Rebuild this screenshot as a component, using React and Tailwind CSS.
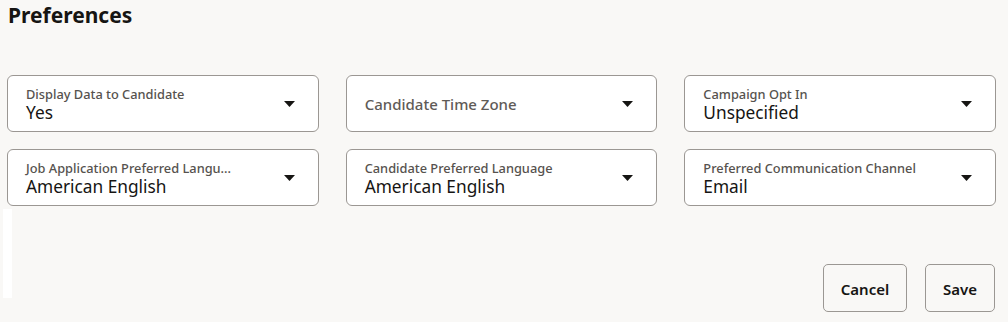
import React from "react";

const font = { fontFamily: '"Noto Sans", "Open Sans", sans-serif' };

function Caret() {
  return (
    <svg width="11" height="6" viewBox="0 0 11 6" className="shrink-0">
      <path d="M0 0 L11 0 L5.5 6 Z" fill="#161513" />
    </svg>
  );
}

function Field({ label, value, placeholder }) {
  return (
    <div className="h-[57px] rounded-[6px] border border-[#9b9793] bg-white flex items-center pl-[18px] pr-[23px]">
      <div className="flex-1 min-w-0">
        {placeholder ? (
          <div className="text-[15px] text-[#5f5b57] font-medium leading-[20px] mt-[1px]">{placeholder}</div>
        ) : (
          <div className="mt-[2px] flex flex-col">
            <div className="text-[12.8px] text-[#56524e] font-medium leading-[15px] whitespace-nowrap">{label}</div>
            <div className="text-[17.3px] text-[#161513] leading-[21px]">{value}</div>
          </div>
        )}
      </div>
      <Caret />
    </div>
  );
}

export default function App() {
  return (
    <div className="relative w-[1008px] h-[322px] bg-[#f9f8f6] overflow-hidden" style={font}>
      <h1 className="pl-[8px] pt-[1px] text-[21px] font-bold leading-[28px] text-[#161513]">Preferences</h1>
      <div className="ml-[7px] mt-[46px] w-[989px] grid grid-cols-3 gap-x-[27px] gap-y-[17px]">
        <Field label="Display Data to Candidate" value="Yes" />
        <Field placeholder="Candidate Time Zone" />
        <Field label="Campaign Opt In" value="Unspecified" />
        <Field label="Job Application Preferred Langu..." value="American English" />
        <Field label="Candidate Preferred Language" value="American English" />
        <Field label="Preferred Communication Channel" value="Email" />
      </div>
      <div className="flex">
        <div className="ml-[3px] mt-[3px] w-[9px] h-[89px] bg-white" />
        <div className="ml-auto mr-[13px] mt-[58px] flex gap-[18px]">
          <button className="h-[48px] w-[84px] rounded-[5px] border border-[#9b9793] bg-transparent text-[15px] font-semibold text-[#161513] pt-[2px]">Cancel</button>
          <button className="h-[48px] w-[70px] rounded-[5px] border border-[#9b9793] bg-transparent text-[15px] font-semibold text-[#161513] pt-[2px]">Save</button>
        </div>
      </div>
    </div>
  );
}
